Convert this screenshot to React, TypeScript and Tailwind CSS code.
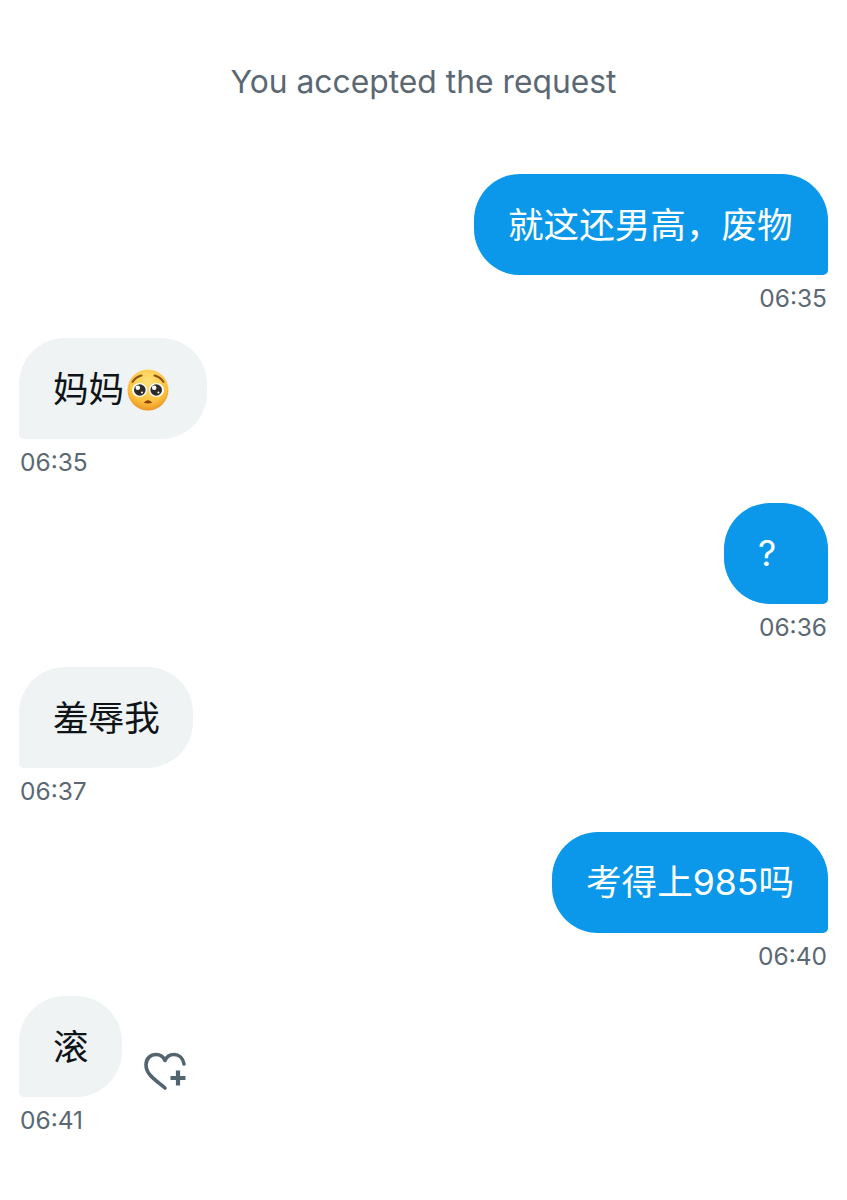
import React from "react";

const font = "font-['Inter','Noto_Sans_CJK_SC',sans-serif]";

function Time({ t, right }: { t: string; right?: boolean }) {
  return (
    <div className={`text-[24.5px] leading-[30px] mt-[8px] mb-[1px] text-[#5b6873] ${right ? "text-right pr-[1px]" : "pl-[1px]"}`}>{t}</div>
  );
}

function Sent({ text, t, w }: { text: string; t: string; w: string }) {
  return (
    <div className="flex flex-col items-end pr-[19px]">
      <div className={`h-[101px] ${w} flex items-center pl-[34px] pt-[2px] rounded-[46px] rounded-br-[5px] bg-[#0b98ea] text-white text-[35.6px] leading-none`}>
        {text}
      </div>
      <Time t={t} right />
    </div>
  );
}

function Received({ children, t, w, extra }: { children: React.ReactNode; t: string; w: string; extra?: React.ReactNode }) {
  return (
    <div className="flex flex-col items-start pl-[19px]">
      <div className="flex items-end">
        <div className={`h-[101px] ${w} flex items-center pl-[34px] pt-[2px] rounded-[46px] rounded-bl-[5px] bg-[#eff3f4] text-[#0f1419] text-[35.6px] leading-none`}>
          {children}
        </div>
        {extra}
      </div>
      <Time t={t} />
    </div>
  );
}

function Emoji() {
  return (
    <svg width="42" height="42" viewBox="0 0 42 42" className="ml-[3px]">
      <defs>
        <radialGradient id="f" cx="50%" cy="30%" r="75%">
          <stop offset="0%" stopColor="#ffe27a" />
          <stop offset="65%" stopColor="#fbc13f" />
          <stop offset="100%" stopColor="#ea8a1e" />
        </radialGradient>
      </defs>
      <circle cx="21" cy="21" r="20.5" fill="url(#f)" />
      <ellipse cx="12.5" cy="21" rx="7.5" ry="7" fill="#fff" />
      <ellipse cx="29.5" cy="21" rx="7.5" ry="7" fill="#fff" />
      <circle cx="12.8" cy="21" r="5.8" fill="#2f2a2a" />
      <circle cx="29.2" cy="21" r="5.8" fill="#2f2a2a" />
      <circle cx="10.8" cy="18.8" r="2.3" fill="#fff" />
      <circle cx="27.2" cy="18.8" r="2.3" fill="#fff" />
      <circle cx="15" cy="23.5" r="1" fill="#fff" />
      <circle cx="31.4" cy="23.5" r="1" fill="#fff" />
      <path d="M17.5 33.5 q3.5 -3.5 7 0 q-3.5 1 -7 0z" fill="#8a3b12" stroke="#8a3b12" strokeWidth="1" strokeLinejoin="round" />
      <path d="M5.5 13 q3 -5 9 -6.5 M36.5 13 q-3 -5 -9 -6.5" fill="none" stroke="#8a5314" strokeWidth="2" strokeLinecap="round" />
    </svg>
  );
}

function HeartPlus() {
  return (
    <svg width="46" height="40" viewBox="0 0 46 40" fill="none" stroke="#536471" strokeWidth="3.6" strokeLinecap="round" strokeLinejoin="round">
      <path d="M22 36 C14 29 3 23 3 13 C3 6 8 2.5 13 2.5 C17 2.5 20.5 5 22 8.5 C23.5 5 27 2.5 31 2.5 C36 2.5 40 6 41 12" />
      <path d="M35 18.5 V33.5 M27.5 26 H42.5" strokeWidth="4.2" strokeLinecap="butt" />
    </svg>
  );
}

export default function App() {
  return (
    <div className={`${font} w-[847px] h-[1200px] bg-white overflow-hidden pt-[64px]`}>
      <div className="text-center text-[31.8px] leading-[36px] text-[#5b6873]">You accepted the request</div>
      <div className="mt-[74px] flex flex-col gap-[24.4px]">
        <Sent text="就这还男高，废物" t="06:35" w="w-[354px]" />
        <Received t="06:35" w="w-[188px]">
          <span>妈妈</span>
          <Emoji />
        </Received>
        <Sent text="?" t="06:36" w="w-[104px]" />
        <Received t="06:37" w="w-[174px]">羞辱我</Received>
        <Sent text="考得上985吗" t="06:40" w="w-[276px]" />
        <Received
          t="06:41"
          w="w-[103px]"
          extra={
            <div className="ml-[21px] mb-[5px]">
              <HeartPlus />
            </div>
          }
        >
          滚
        </Received>
      </div>
    </div>
  );
}
